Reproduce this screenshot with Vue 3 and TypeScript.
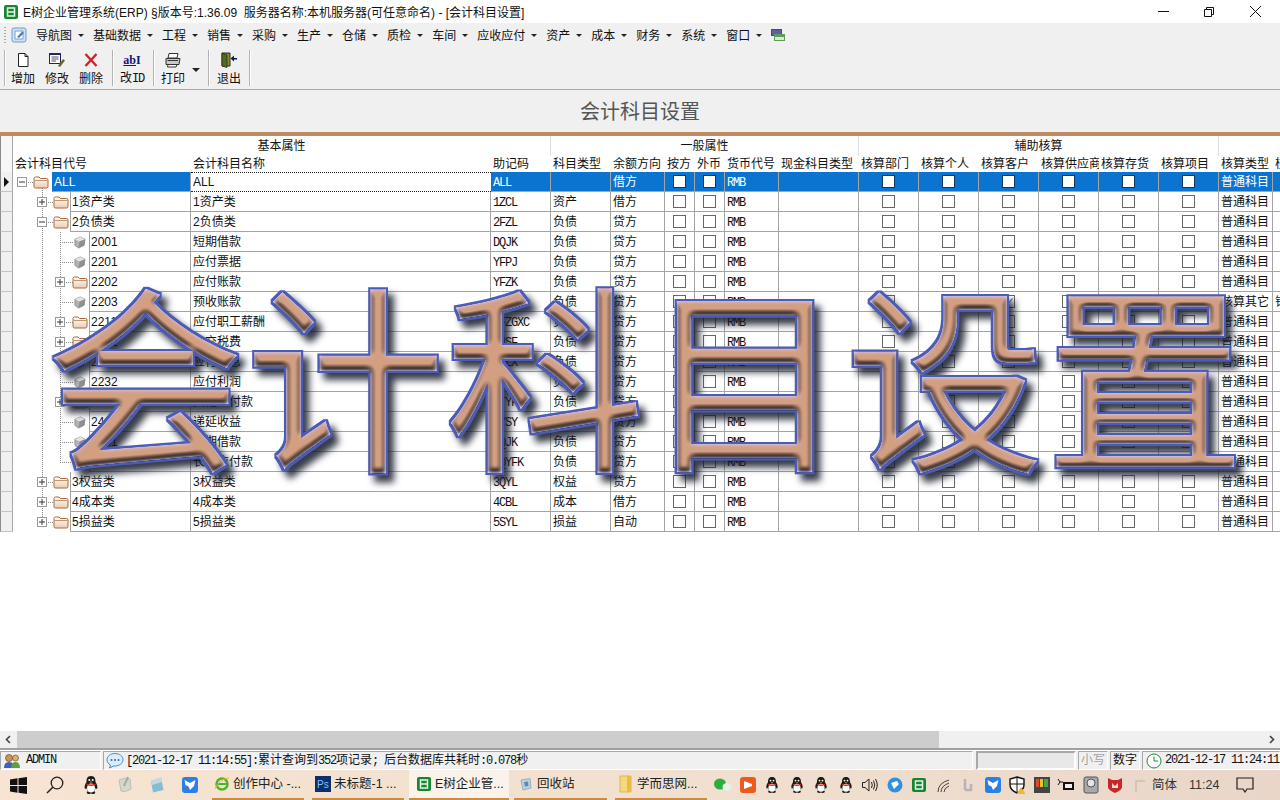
<template>
  <div class="app">
    <!-- shared icons and the bevel filter of the big caption -->
    <svg class="defs" aria-hidden="true">
      <defs>
        <linearGradient id="folderFill" x1="0" y1="0" x2="0" y2="1">
          <stop offset="0" stop-color="#fff" />
          <stop offset="1" stop-color="#e9cdb4" />
        </linearGradient>
        <filter id="bevel" x="-6%" y="-6%" width="116%" height="116%" color-interpolation-filters="sRGB">
          <feMorphology in="SourceAlpha" operator="dilate" radius="2" result="fat" />
          <feFlood flood-color="#4a5cb8" />
          <feComposite in2="fat" operator="in" result="outline" />
          <feGaussianBlur in="fat" stdDeviation="3.500" result="fatBlur" />
          <feOffset in="fatBlur" dx="6" dy="7" result="off" />
          <feFlood flood-color="#141a28" flood-opacity="0.85" />
          <feComposite in2="off" operator="in" result="shadow" />
          <feGaussianBlur in="SourceAlpha" stdDeviation="3.200" result="soft" />
          <feDiffuseLighting in="soft" surfaceScale="7" diffuseConstant="1.2" lighting-color="#fff" result="light">
            <feDistantLight azimuth="270" elevation="60" />
          </feDiffuseLighting>
          <feComposite in="light" in2="SourceGraphic" operator="arithmetic" k1="1.05" k2="0" k3="0" k4="0" result="lit" />
          <feComposite in="lit" in2="SourceAlpha" operator="in" result="face" />
          <feGaussianBlur in="SourceAlpha" stdDeviation="2" result="edgeSoft" />
          <feComposite in="SourceAlpha" in2="edgeSoft" operator="arithmetic" k1="0" k2="1.700" k3="-1.700" k4="0" result="edgeMask" />
          <feFlood flood-color="#cfc0e2" />
          <feComposite in2="edgeMask" operator="in" result="edge" />
          <feMerge>
            <feMergeNode in="shadow" />
            <feMergeNode in="outline" />
            <feMergeNode in="face" />
            <feMergeNode in="edge" />
          </feMerge>
        </filter>
        <symbol id="folder" viewBox="0 0 16 14">
          <path d="M1 3.500 Q1 2 2.500 2 H6 L7.500 3.500 H13.500 Q15 3.500 15 5 V11.500 Q15 13 13.500 13 H2.500 Q1 13 1 11.500 Z" fill="url(#folderFill)" stroke="#a8683c" />
          <path d="M1.500 5.500 H14.500" stroke="#c89468" />
        </symbol>
        <symbol id="cube" viewBox="0 0 14 14">
          <path d="M2 3.500 L8 1 L13 3.500 L12 10 L6 13 L2 10 Z" fill="#b3b3b3" stroke="#777" stroke-width=".7" />
          <path d="M2 3.500 L7 6 L13 3.500 L8 1 Z" fill="#e4e4e4" />
          <path d="M7 6 L6 13 L12 10 L13 3.500 Z" fill="#8f8f8f" />
        </symbol>
        <symbol id="qq" viewBox="0 0 18 20">
          <path d="M9 1 C5 1 4.500 4 4.500 7 C3 9 2 12 3 14 C4 14 4.500 13 4.500 13 C5 15 6 16 6 16 C4 17 4.500 19 7 19 C8 19 8.500 18.500 9 18.500 C9.500 18.500 10 19 11 19 C13.500 19 14 17 12 16 C12 16 13 15 13.500 13 C13.500 13 14 14 15 14 C16 12 15 9 13.500 7 C13.500 4 13 1 9 1 Z" fill="#1c1c1c" />
          <ellipse cx="9" cy="13" rx="4" ry="4.500" fill="#fff" />
          <path d="M4.500 8.500 Q9 10.500 13.500 8.500 L13.500 10 Q9 12 4.500 10 Z" fill="#d9261c" />
          <circle cx="7.300" cy="5" r="1" fill="#fff" />
          <circle cx="10.700" cy="5" r="1" fill="#fff" />
          <path d="M7.500 7 Q9 6 10.500 7 Q9 8.200 7.500 7 Z" fill="#e9a825" />
        </symbol>
        <symbol id="dove" viewBox="0 0 18 18">
          <rect x="1" y="1" width="16" height="16" rx="3" fill="#2d7fe3" />
          <path d="M3.500 4 L9 7 L14.500 4 L13 10 L9 14 L7.500 10.500 L4.500 9 Z" fill="#fff" />
        </symbol>
        <symbol id="etree" viewBox="0 0 16 16">
          <rect x="1" y="1" width="14" height="14" rx="2" fill="#17852f" />
          <path d="M4.500 4 H11.500 V12 H4.500 Z M4.500 8 H11.500" fill="none" stroke="#e8f6ea" stroke-width="1.500" />
        </symbol>
      </defs>
    </svg>

    <header class="titlebar">
      <svg class="title-icon" width="16" height="16"><use href="#etree" /></svg>
      <span class="title-text">E树企业管理系统(ERP) §版本号:1.36.09&nbsp;&nbsp;服务器名称:本机服务器(可任意命名) - [会计科目设置]</span>
      <div class="win-btns">
        <svg width="46" height="22" viewBox="0 0 46 22"><path d="M18 10.500 H29" stroke="#111" /></svg>
        <svg width="46" height="22" viewBox="0 0 46 22"><path d="M18.500 8.500 H25.500 V15.500 H18.500 Z M20.500 8.500 V6.500 H27.500 V13.500 H25.500" fill="none" stroke="#111" /></svg>
        <svg width="46" height="22" viewBox="0 0 46 22"><path d="M18 5 L29 16 M29 5 L18 16" stroke="#111" /></svg>
      </div>
    </header>

    <nav class="menubar">
      <i class="grip"></i>
      <svg class="menu-logo" width="18" height="18" viewBox="0 0 18 18">
        <rect x="2" y="2" width="14" height="14" rx="2" fill="#cfe2f5" stroke="#6f9bc6" />
        <path d="M5 5 H13 V13 H5 Z" fill="#fff" stroke="#7b9fc0" />
        <path d="M7 11 L12 5.500 L14 7 L9 12 Z" fill="#4d82b8" />
      </svg>
      <span v-for="m in menus" :key="m" class="menu-item">{{ m }}<i class="caret"></i></span>
      <svg width="14" height="12" viewBox="0 0 14 12">
        <rect x="0.500" y="0.500" width="10" height="6" fill="#5d5f9f" stroke="#47497d" />
        <rect x="3.500" y="5.500" width="10" height="6" fill="#d5ecd0" stroke="#5c9c58" />
        <path d="M3.500 7 H13.500" stroke="#5c9c58" stroke-width="2" />
      </svg>
    </nav>

    <div class="toolbar">
      <i class="sep sep--first"></i>
      <button class="tool">
        <svg width="16" height="16" viewBox="0 0 16 16"><path d="M3.500 1.500 H10 L13 4.500 V14.500 H3.500 Z M10 1.500 V4.500 H13" fill="#fff" stroke="#222" /></svg>
        <span>增加</span>
      </button>
      <button class="tool">
        <svg width="18" height="16" viewBox="0 0 18 16">
          <rect x="1.500" y="1.500" width="11" height="10" fill="#fff" stroke="#24245e" />
          <path d="M1.500 2 H12.500" stroke="#24245e" stroke-width="2" />
          <path d="M3.500 5 H10.500 M3.500 7 H10.500 M3.500 9 H8" stroke="#555" />
          <path d="M10 14 L15 7 L17 8.500 L12 15 Z" fill="#6e6a1d" />
        </svg>
        <span>修改</span>
      </button>
      <button class="tool">
        <svg width="16" height="16" viewBox="0 0 16 16"><path d="M2.500 2 L13.500 14 M13.500 2 L2.500 14" stroke="#d0232a" stroke-width="2.400" /></svg>
        <span>删除</span>
      </button>
      <i class="sep"></i>
      <button class="tool">
        <b class="abi"><u>ab</u>I</b>
        <span>改<em class="mono">ID</em></span>
      </button>
      <i class="sep"></i>
      <button class="tool">
        <svg width="18" height="16" viewBox="0 0 18 16">
          <path d="M5 1.500 H14 L13 6 H4 Z" fill="#fff" stroke="#333" />
          <path d="M2 6.500 H16 L15 12.500 H2 Z" fill="#c9c9c9" stroke="#333" />
          <path d="M4 12.500 H13 L12 15 H3.500 Z M3.500 8.500 H14" fill="#fff" stroke="#333" />
        </svg>
        <span>打印</span>
      </button>
      <i class="tool-drop"></i>
      <i class="sep"></i>
      <button class="tool tool--exit">
        <svg width="18" height="16" viewBox="0 0 18 16">
          <path d="M2 1 H10 V14 H2 Z" fill="#8b8b3c" stroke="#2f2f10" />
          <path d="M2 1 L7 3 V15.500 L2 14 Z" fill="#4d6b21" stroke="#2f2f10" stroke-width=".8" />
          <path d="M17 6 H14 V3.500 L10.500 6.500 L14 9.500 V7.500 H17 Z" fill="#14146e" />
        </svg>
        <span>退出</span>
      </button>
      <i class="sep"></i>
    </div>

    <div class="page-title">会计科目设置</div>
    <div class="band"></div>

    <section class="grid">
      <div class="cols head-row">
        <div class="ind"></div>
        <div class="group group--base">基本属性</div>
        <div class="group group--general">一般属性</div>
        <div class="group group--aux">辅助核算</div>
        <div class="group group--rest"></div>
      </div>
      <div class="cols head-row">
        <div class="ind"></div>
        <div v-for="h in headers" :key="h" class="head-cell">{{ h }}</div>
      </div>

      <div v-for="(r, i) in rows" :key="r.name + i" class="cols row" :class="{ 'is-active': i === 0 }">
        <div class="ind"><i v-if="i === 0" class="pointer"></i></div>

        <div class="code">
          <svg class="gutter" :width="gutters[r.level]" height="20">
            <path v-if="i < 17" :d="`M29.500 ${i === 0 ? 10 : 0} V20`" class="guide" />
            <path v-if="i === 17" d="M29.500 0 V10" class="guide" />
            <path v-if="i >= 3 && i <= 13" d="M47.500 0 V20" class="guide" />
            <path v-if="i === 14" d="M47.500 0 V10" class="guide" />
            <path v-if="r.level === 0" d="M9 10.500 H20" class="guide" />
            <path v-if="r.level === 1" d="M29 10.500 H40" class="guide" />
            <path v-if="r.level === 2" d="M47 10.500 H60" class="guide" />
            <g v-if="r.box" :transform="`translate(${[4, 24, 42][r.level]} 5)`">
              <rect x=".5" y=".5" width="9" height="9" fill="#fff" stroke="#9a9a9a" />
              <path d="M2 5 H8" stroke="#333" />
              <path v-if="r.box === 'plus'" d="M5 2 V8" stroke="#333" />
            </g>
            <use v-if="r.leaf" href="#cube" x="60" y="4" width="13" height="13" />
            <use v-else href="#folder" :x="[20, 40, 59][r.level]" y="3" width="16" height="14" />
          </svg>
          <div class="code-label">{{ r.code }}</div>
        </div>

        <div class="cell cell--name">{{ r.name }}</div>
        <div class="cell"><span class="mono">{{ r.short }}</span></div>
        <div class="cell">{{ r.type }}</div>
        <div class="cell">{{ r.dir }}</div>
        <div class="cell cell--check"><i class="check"></i></div>
        <div class="cell cell--check"><i class="check"></i></div>
        <div class="cell"><span class="mono">RMB</span></div>
        <div class="cell"></div>
        <div v-for="k in 6" :key="k" class="cell cell--check">
          <i class="check" :class="{ 'is-on': r.checked === k }"></i>
        </div>
        <div class="cell">{{ r.calc || '普通科目' }}</div>
        <div class="cell">{{ r.extra }}</div>
      </div>
    </section>

    <div class="hscroll">
      <svg width="17" height="17" viewBox="0 0 17 17"><path d="M10 5 L6.500 8.500 L10 12" fill="none" stroke="#444" stroke-width="1.600" /></svg>
      <div class="hscroll__thumb"></div>
      <div class="hscroll__track"></div>
      <svg width="17" height="17" viewBox="0 0 17 17"><path d="M7 5 L10.500 8.500 L7 12" fill="none" stroke="#444" stroke-width="1.600" /></svg>
    </div>

    <footer class="status">
      <div class="panel panel--user">
        <svg width="18" height="16" viewBox="0 0 18 16">
          <circle cx="6" cy="5" r="3.500" fill="#c9964f" stroke="#5a3c1c" stroke-width=".6" />
          <path d="M1 15 Q1 9 6 9 Q11 9 11 15 Z" fill="#4160b5" />
          <circle cx="12.500" cy="5" r="3" fill="#d8b16b" stroke="#5a3c1c" stroke-width=".6" />
          <path d="M8 15 Q8 9 12.500 9 Q17 9 17 15 Z" fill="#5f9e3f" />
        </svg>
        <span class="mono">ADMIN</span>
      </div>
      <div class="panel panel--msg">
        <svg width="18" height="17" viewBox="0 0 18 17">
          <path d="M9 1.500 C4.500 1.500 1 4.200 1 7.800 C1 10 2.400 11.800 4.500 13 L3.500 16 L7.500 14 C12.800 14.500 17 11.500 17 7.800 C17 4.200 13.500 1.500 9 1.500 Z" fill="#dcecfa" stroke="#3b8fd0" />
          <circle cx="5.500" cy="8" r="1" fill="#2f6ea8" /><circle cx="9" cy="8" r="1" fill="#2f6ea8" /><circle cx="12.500" cy="8" r="1" fill="#2f6ea8" />
        </svg>
        <span><span class="mono">[2021-12-17 11:14:55]:</span>累计查询到<span class="mono">352</span>项记录<span class="mono">; </span>后台数据库共耗时<span class="mono">:0.078</span>秒</span>
      </div>
      <div class="panel panel--progress"></div>
      <div class="panel panel--lock panel--off">小写</div>
      <div class="panel panel--lock">数字</div>
      <div class="panel panel--clock">
        <svg width="16" height="16" viewBox="0 0 16 16"><circle cx="8" cy="8" r="7" fill="#fff" stroke="#1f8a35" /><path d="M8 3.500 V8 H12" fill="none" stroke="#1f8a35" /></svg>
        <span class="mono">2021-12-17 11:24:11</span>
      </div>
    </footer>

    <div class="taskbar">
      <div class="quick">
        <span>
          <svg width="17" height="17" viewBox="0 0 17 17"><path d="M0 2.500 L7.500 1.300 V8 H0 Z M8.500 1.200 L17 0 V8 H8.500 Z M0 9 H7.500 V15.700 L0 14.500 Z M8.500 9 H17 V17 L8.500 15.800 Z" fill="#111" /></svg>
        </span>
        <span>
          <svg width="18" height="18" viewBox="0 0 18 18"><circle cx="11" cy="7" r="5.800" fill="none" stroke="#222" stroke-width="1.300" /><path d="M6.800 11.200 L1 17" stroke="#222" stroke-width="1.500" /></svg>
        </span>
        <span><svg width="18" height="20"><use href="#qq" /></svg></span>
        <span>
          <svg width="18" height="18" viewBox="0 0 18 18" opacity=".6"><path d="M3 4 Q9 1 14 3 L15 13 Q9 17 5 15 Z" fill="#c4cfc9" stroke="#99a69f" /><path d="M12 1 L8 10" stroke="#6c8f7f" stroke-width="2" /></svg>
        </span>
        <span>
          <svg width="18" height="18" viewBox="0 0 18 18"><path d="M3 5 L13 1.500 L15.500 14 L5 16.500 Z" fill="#87bcd0" /><path d="M3 5 L13 1.500 L14 6 L4 9 Z" fill="#bfdbe5" /></svg>
        </span>
        <span><svg width="18" height="18"><use href="#dove" /></svg></span>
      </div>

      <div v-for="t in tasks" :key="t.label" class="task" :class="`task--${t.icon}`">
        <svg v-if="t.icon === 'ie'" width="16" height="16" viewBox="0 0 16 16">
          <circle cx="8" cy="8" r="5.500" fill="none" stroke="#4fb52b" stroke-width="2.500" />
          <path d="M3 8 H13" stroke="#4fb52b" stroke-width="2" /><path d="M1 13 Q5 3 15 2" fill="none" stroke="#e2c02c" />
        </svg>
        <svg v-else-if="t.icon === 'ps'" width="16" height="16" viewBox="0 0 16 16">
          <rect width="16" height="16" fill="#0c2f6f" /><text x="2" y="12" font-size="10" font-family="Liberation Sans" fill="#7fc4f4">Ps</text>
        </svg>
        <svg v-else-if="t.icon === 'erp'" width="16" height="16"><use href="#etree" /></svg>
        <svg v-else-if="t.icon === 'bin'" width="16" height="16" viewBox="0 0 16 16">
          <path d="M3 4 L12 2.500 L13 12 L5 14 Z" fill="#bcd0dc" stroke="#9cb0bc" /><path d="M6 6 L10 5.500 L10.500 10 L7 10.500 Z" fill="#4d8fc4" />
        </svg>
        <svg v-else width="16" height="18" viewBox="0 0 16 18">
          <path d="M2 1 H13 V17 H2 Z" fill="#f5d77d" stroke="#d9b65a" /><path d="M9 1 H13 V17 H9 Z" fill="#e6bb4a" />
        </svg>
        <span>{{ t.label }}</span>
      </div>

      <div class="tray">
        <span><svg width="18" height="14" viewBox="0 0 18 14"><ellipse cx="6" cy="6" rx="6" ry="5.500" fill="#2bae3e" /><ellipse cx="13" cy="9" rx="4.500" ry="4" fill="#e9efe9" /></svg></span>
        <span><svg width="16" height="16" viewBox="0 0 16 16"><rect width="16" height="16" rx="3" fill="#ec5a1d" /><path d="M4 4 L12 7 L12 9 L4 12 Z" fill="#fff" /></svg></span>
        <span v-for="q in 4" :key="q"><svg width="16" height="18"><use href="#qq" /></svg></span>
        <span><svg width="18" height="16" viewBox="0 0 18 16"><path d="M1.500 5.500 H4 L8 2 V14 L4 10.500 H1.500 Z M10.500 5 Q12 8 10.500 11 M12.500 3.500 Q15 8 12.500 12.500 M14.500 2 Q18 8 14.500 14" fill="none" stroke="#222" /></svg></span>
        <span><svg width="16" height="16" viewBox="0 0 16 16"><circle cx="8" cy="8" r="7.500" fill="#2f8fe0" /><path d="M4 6 L10 4 L12 7 L7 12 Z" fill="#fff" /></svg></span>
        <span><svg width="16" height="16"><use href="#etree" /></svg></span>
        <span><svg width="16" height="16" viewBox="0 0 16 16"><path d="M2 15 Q2 6 13 3 M5 15 Q5 9 13 6 M8 15 Q8 11 13 9" fill="none" stroke="#444" /></svg></span>
        <span><svg width="12" height="14" viewBox="0 0 12 14"><path d="M3 1 V12 M9 6 V12 H3" fill="none" stroke="#b9b0c2" stroke-width="2.500" /></svg></span>
        <span><svg width="18" height="18"><use href="#dove" /></svg></span>
        <span>
          <svg width="18" height="18" viewBox="0 0 18 18"><path d="M9 1 L16 3 V9 Q16 14 9 17 Q2 14 2 9 V3 Z" fill="#fff" stroke="#111" stroke-width="1.400" /><path d="M9 1 V17 M2 8 H16" stroke="#111" /><path d="M13 11 L17.500 18 H8.500 Z" fill="#f2b632" /></svg>
        </span>
        <span>
          <svg width="16" height="16" viewBox="0 0 16 16"><rect width="16" height="16" fill="#444" /><rect x="2" y="2" width="3" height="8" fill="#e3452f" /><rect x="6" y="2" width="3" height="8" fill="#efc02f" /><rect x="10" y="2" width="4" height="8" fill="#43a84a" /></svg>
        </span>
        <span><svg width="18" height="14" viewBox="0 0 18 14"><rect x="6" y="4" width="11" height="8" fill="#111" /><rect x="8" y="6" width="7" height="4" fill="#eee" /><path d="M1 1 L3 4 L1 7 M3 4 H6" stroke="#111" fill="none" /></svg></span>
        <span><svg width="16" height="18" viewBox="0 0 16 18"><rect x="1" y="1" width="14" height="16" rx="2" fill="#a9a9a9" stroke="#555" /><circle cx="8" cy="7" r="4" fill="#e5e5e5" stroke="#555" /></svg></span>
        <span><svg width="16" height="16" viewBox="0 0 16 16"><path d="M1 1 L5 3 H11 L15 1 V10 Q15 13 8 16 Q1 13 1 10 Z" fill="#c9252c" /><path d="M5 6 L8 9 L11 6 V11 H5 Z" fill="#f2dcd6" /></svg></span>
        <span><svg width="12" height="14" viewBox="0 0 12 14"><path d="M2 14 V3 H11" fill="none" stroke="#cdbdb0" stroke-width="1.400" /></svg></span>
      </div>

      <span class="ime">简体</span>
      <span class="clock">11:24</span>
      <svg class="notify" width="18" height="16" viewBox="0 0 18 16"><path d="M1 1 H17 V12 H11 L9 15 L7 12 H1 Z" fill="none" stroke="#222" stroke-width="1.200" /></svg>
    </div>

    <!-- caption pasted over the window -->
    <div class="caption" aria-label="会计科目设置">
      <span v-for="c in '会计科目设置'" :key="c">{{ c }}</span>
    </div>
  </div>
</template>

<script setup lang="ts">
interface AccountRow {
  level: 0 | 1 | 2
  box?: 'plus' | 'minus'
  leaf?: boolean
  code: string
  name: string
  short: string
  type: string
  dir: string
  checked?: number
  calc?: string
  extra?: string
}

const menus = ['导航图', '基础数据', '工程', '销售', '采购', '生产', '仓储', '质检', '车间', '应收应付', '资产', '成本', '财务', '系统', '窗口']

const headers = [
  '会计科目代号', '会计科目名称', '助记码', '科目类型', '余额方向', '按方', '外币', '货币代号', '现金科目类型',
  '核算部门', '核算个人', '核算客户', '核算供应商', '核算存货', '核算项目', '核算类型', '核算其它',
]

// width of the tree gutter in front of the code, per level
const gutters = [39, 57, 76]

const rows: AccountRow[] = [
  { level: 0, box: 'minus', code: 'ALL', name: 'ALL', short: 'ALL', type: '', dir: '借方' },
  { level: 1, box: 'plus', code: '1资产类', name: '1资产类', short: '1ZCL', type: '资产', dir: '借方' },
  { level: 1, box: 'minus', code: '2负债类', name: '2负债类', short: '2FZL', type: '负债', dir: '贷方' },
  { level: 2, leaf: true, code: '2001', name: '短期借款', short: 'DQJK', type: '负债', dir: '贷方' },
  { level: 2, leaf: true, code: '2201', name: '应付票据', short: 'YFPJ', type: '负债', dir: '贷方' },
  { level: 2, box: 'plus', code: '2202', name: '应付账款', short: 'YFZK', type: '负债', dir: '贷方' },
  { level: 2, leaf: true, code: '2203', name: '预收账款', short: 'YSZK', type: '负债', dir: '贷方', checked: 3, calc: '核算其它', extra: '销售' },
  { level: 2, box: 'plus', code: '2211', name: '应付职工薪酬', short: 'YFZGXC', type: '负债', dir: '贷方' },
  { level: 2, box: 'plus', code: '2221', name: '应交税费', short: 'YJSF', type: '负债', dir: '贷方' },
  { level: 2, leaf: true, code: '2231', name: '应付利息', short: 'YFLX', type: '负债', dir: '贷方' },
  { level: 2, leaf: true, code: '2232', name: '应付利润', short: 'YFLR', type: '负债', dir: '贷方' },
  { level: 2, box: 'plus', code: '2241', name: '其他应付款', short: 'QTYFK', type: '负债', dir: '贷方' },
  { level: 2, leaf: true, code: '2401', name: '递延收益', short: 'DYSY', type: '负债', dir: '贷方' },
  { level: 2, leaf: true, code: '2501', name: '长期借款', short: 'CQJK', type: '负债', dir: '贷方' },
  { level: 2, leaf: true, code: '2701', name: '长期应付款', short: 'CQYFK', type: '负债', dir: '贷方' },
  { level: 1, box: 'plus', code: '3权益类', name: '3权益类', short: '3QYL', type: '权益', dir: '贷方' },
  { level: 1, box: 'plus', code: '4成本类', name: '4成本类', short: '4CBL', type: '成本', dir: '借方' },
  { level: 1, box: 'plus', code: '5损益类', name: '5损益类', short: '5SYL', type: '损益', dir: '自动' },
]

const tasks = [
  { icon: 'ie', label: '创作中心 -...' },
  { icon: 'ps', label: '未标题-1 ...' },
  { icon: 'erp', label: 'E树企业管...' },
  { icon: 'bin', label: '回收站' },
  { icon: 'dir', label: '学而思网...' },
]
</script>

<style>
html,
body {
  margin: 0;
  overflow: hidden;
}
</style>

<style scoped>
.app {
  position: relative;
  display: flex;
  flex-direction: column;
  width: 1280px;
  height: 800px;
  overflow: hidden;
  background: #fff;
  color: #111;
  font: 12px/1.2 "Liberation Sans", "Noto Sans CJK SC", sans-serif;
}

.defs {
  position: absolute;
  width: 0;
  height: 0;
}

.mono {
  font-family: "Liberation Mono", "Noto Sans CJK SC", monospace;
  font-size: 12px;
  font-style: normal;
  letter-spacing: -1.2px;
}

/* title bar */
.titlebar {
  display: flex;
  align-items: center;
  flex: 0 0 23px;
  padding-left: 3px;
  background: #fff;
}

.title-icon {
  margin-right: 4px;
}

.title-text {
  margin-top: 3px;
  font-size: 12px;
  white-space: nowrap;
}

.win-btns {
  display: flex;
  margin-left: auto;
  padding-right: 2px;
}

/* menu */
.menubar {
  display: flex;
  align-items: center;
  flex: 0 0 24px;
  padding-left: 4px;
  background: #f0f0f0;
}

.grip {
  width: 2px;
  height: 16px;
  margin-right: 4px;
  background: repeating-linear-gradient(#aaa 0 1px, transparent 1px 3px);
}

.menu-logo {
  margin-right: 8px;
}

.menu-item {
  display: flex;
  align-items: center;
  gap: 6px;
  padding: 2px 9px 0 0;
  white-space: nowrap;
}

.caret {
  width: 0;
  height: 0;
  border: 3px solid transparent;
  border-top: 3px solid #222;
  border-bottom: 0;
}

/* toolbar */
.toolbar {
  display: flex;
  align-items: stretch;
  flex: 0 0 43px;
  box-sizing: border-box;
  padding: 3px 0 3px 4px;
  background: #f0f0f0;
  border-bottom: 1px solid #a9a9a9;
}

.sep {
  flex: none;
  width: 1px;
  margin: 0 2px 0 4px;
  background: #b4b4b4;
  box-shadow: 1px 0 #fff;
}

.sep--first {
  margin-left: 0;
  margin-right: 1px;
}

.tool {
  display: flex;
  flex-direction: column;
  align-items: center;
  justify-content: space-between;
  width: 34px;
  padding: 2px 0 0;
  border: 0;
  background: none;
  color: #111;
  font: inherit;
}

.tool--exit {
  margin-left: 1px;
  margin-right: -1px;
}

.abi {
  color: #14147a;
  font: bold 12px/16px "Liberation Serif", serif;
}

.tool-drop {
  width: 0;
  height: 0;
  margin: 18px 4px 0 2px;
  border: 4px solid transparent;
  border-top: 4px solid #222;
  border-bottom: 0;
}

/* page heading */
.page-title {
  flex: 0 0 42px;
  box-sizing: border-box;
  padding-top: 3px;
  background: #f0f0f0;
  color: #555;
  font-size: 20px;
  line-height: 39px;
  text-align: center;
}

.band {
  flex: 0 0 4px;
  background: #c08a60;
}

/* tree grid */
.grid {
  flex: 1;
  min-height: 0;
  overflow: hidden;
  background: #fff;
}

.cols {
  display: grid;
  grid-template-columns: 13px 178px 300px 60px 60px 54px 30px 30px 54px 80px 60px 60px 60px 60px 60px 60px 54px 100px;
  width: 1372px;
}

.head-row {
  height: 18px;
  line-height: 20px;
}

.ind {
  box-sizing: border-box;
  display: flex;
  align-items: center;
  justify-content: center;
  background: #f6f6f6;
  border-left: 1px solid #8c8c8c;
  border-right: 1px solid #a8a8a8;
}

.row .ind {
  background: #f0f0f0;
  border-bottom: 1px solid #c4c4c4;
}

.pointer {
  width: 0;
  height: 0;
  border: 5px solid transparent;
  border-left: 5px solid #111;
  border-right: 0;
}

.group {
  box-sizing: border-box;
  text-align: center;
  border-right: 1px solid #dcdcdc;
}

.group--base {
  grid-column: span 3;
}

.group--general {
  grid-column: span 6;
}

.group--aux {
  grid-column: span 6;
}

.group--rest {
  grid-column: span 2;
  border-right: 0;
}

.head-cell {
  padding-left: 2px;
  overflow: hidden;
  white-space: nowrap;
}

.row {
  height: 20px;
  line-height: 19px;
}

.cell,
.code-label {
  box-sizing: border-box;
  height: 20px;
  padding: 1px 0 0 2px;
  overflow: hidden;
  white-space: nowrap;
  border-right: 1px solid #a4a4a4;
  border-bottom: 1px solid #a4a4a4;
}

.code {
  display: flex;
}

.gutter {
  flex: none;
}

.guide {
  fill: none;
  stroke: #8a8a8a;
  stroke-dasharray: 1 1;
}

.code-label {
  flex: 1;
  padding-left: 1px;
  border-left: 1px solid #a4a4a4;
}

.cell--check {
  display: flex;
  align-items: center;
  justify-content: center;
  padding: 0;
}

.check {
  position: relative;
  box-sizing: border-box;
  width: 13px;
  height: 13px;
  background: #fff;
  border: 1px solid #666;
}

.check.is-on::after {
  content: "";
  position: absolute;
  left: 3px;
  top: 0;
  width: 4px;
  height: 7px;
  border: solid #777;
  border-width: 0 1.500px 1.500px 0;
  transform: rotate(42deg);
}

.row.is-active .cell,
.row.is-active .code-label {
  background: #0a74d0;
  color: #fff;
}

.row.is-active .code-label {
  border-left-color: #0a74d0;
}

.row.is-active .cell--name {
  padding-top: 0;
  background: #fff;
  color: #111;
  border: 1px dotted #222;
  border-width: 1px 0;
}

.row.is-active .check {
  border-color: #12365a;
}

/* scroll bar */
.hscroll {
  display: flex;
  flex: 0 0 17px;
  background: #f0f0f0;
}

.hscroll svg {
  flex: none;
}

.hscroll__thumb {
  flex: 0 0 922px;
  background: #cdcdcd;
}

.hscroll__track {
  flex: 1;
}

/* status bar */
.status {
  display: flex;
  flex: 0 0 22px;
  box-sizing: border-box;
  gap: 2px;
  padding-top: 1px;
  background: #f0f0f0;
  border-top: 2px solid #a0a0a0;
  box-shadow: inset 0 1px #fff;
}

.panel {
  display: flex;
  align-items: center;
  gap: 3px;
  box-sizing: border-box;
  height: 19px;
  padding-left: 2px;
  border: 1px solid #d0d0d0;
  border-color: #a8a8a8 #fff #fff #a8a8a8;
  white-space: nowrap;
}

.panel--user {
  width: 101px;
  gap: 5px;
}

.panel--msg {
  width: 870px;
  gap: 2px;
}

.panel--progress {
  width: 100px;
  margin: 0 0 0 1px;
  background: #e8e8e8;
  border-width: 2px;
}

.panel--lock {
  width: 30px;
  justify-content: center;
  padding: 0;
}

.panel--off {
  color: #a0a0a0;
}

.panel--clock {
  flex: 1;
  padding-left: 3px;
}

/* windows taskbar */
.taskbar {
  display: flex;
  align-items: center;
  flex: 0 0 30px;
  background: linear-gradient(90deg, #f7e4d2 0%, #f1e0cf 55%, #e9d6c9 100%);
  font-size: 12.5px;
  color: #222;
}

.quick {
  display: grid;
  grid-template-columns: 36px 37px 35px 33px 32px 34px;
  flex: none;
  margin-right: 5px;
}

.quick span,
.tray span {
  display: flex;
  align-items: center;
  justify-content: center;
}

.task {
  display: flex;
  align-items: center;
  gap: 3px;
  box-sizing: border-box;
  flex: none;
  width: 92px;
  height: 30px;
  margin-right: 5px;
  padding-left: 2px;
  white-space: nowrap;
  border-bottom: 2px solid #d08a3a;
}

.task--ie {
  margin-right: 8px;
}

.task--ps {
  padding-left: 3px;
}

.task--erp {
  width: 100px;
  padding-left: 7px;
  background: #fbf3ea;
}

.task--bin {
  width: 93px;
  margin-right: 8px;
  padding-left: 4px;
}

.task--dir {
  margin-right: 4px;
  padding-left: 3px;
}

.tray {
  display: grid;
  grid-template-columns: repeat(18, 24.5px);
  flex: none;
}

.ime {
  color: #333;
}

.clock {
  margin-left: 12px;
  color: #333;
}

.notify {
  margin-left: 17px;
}

/* big caption over everything, its own picture layer */
.caption {
  position: absolute;
  left: 45px;
  top: 260px;
  display: flex;
  color: #c9977b;
  font: 200px/220px "Noto Sans CJK SC", sans-serif;
  filter: url(#bevel);
  pointer-events: none;
}

.caption span {
  width: 200px;
  text-align: center;
}
</style>
